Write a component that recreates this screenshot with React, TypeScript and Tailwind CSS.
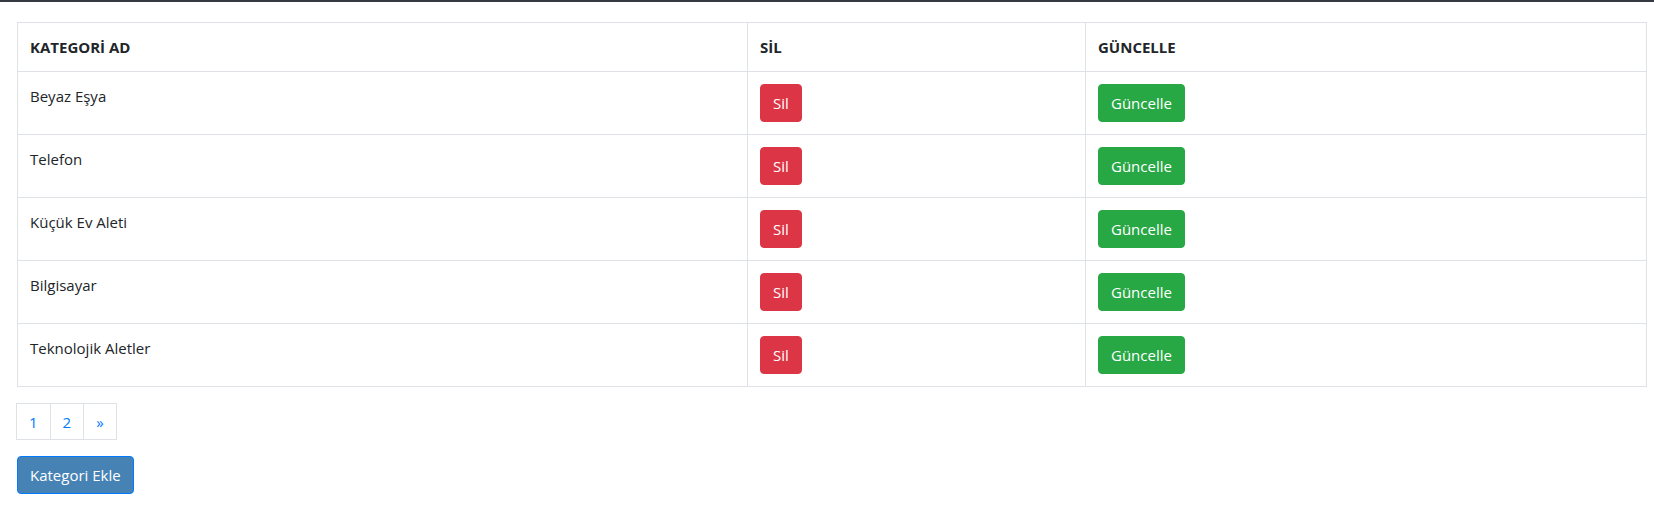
import React from 'react';

const categories = ['Beyaz Eşya', 'Telefon', 'Küçük Ev Aleti', 'Bilgisayar', 'Teknolojik Aletler'];

const font = { fontFamily: '"Segoe UI", "Open Sans", "Noto Sans", sans-serif' };

const App: React.FC = () => {
  return (
    <div className="min-h-[506px] bg-white text-[#212529] text-[15px] leading-6" style={font}>
      <div className="h-[2px] bg-[#343a40]" />

      <div className="pt-5 pr-2">
        <table className="ml-[17px] w-[1629px] table-fixed border-collapse border border-[#dee2e6]">
          <colgroup>
            <col className="w-[730px]" />
            <col className="w-[338px]" />
            <col className="w-[561px]" />
          </colgroup>
          <thead>
            <tr>
              <th className="border border-[#dee2e6] p-3 text-left align-top font-bold">KATEGORİ AD</th>
              <th className="border border-[#dee2e6] p-3 text-left align-top font-bold">SİL</th>
              <th className="border border-[#dee2e6] p-3 text-left align-top font-bold">GÜNCELLE</th>
            </tr>
          </thead>
          <tbody>
            {categories.map((name) => (
              <tr key={name}>
                <td className="border border-[#dee2e6] p-3 align-top">{name}</td>
                <td className="border border-[#dee2e6] p-3 align-top">
                  <button className="rounded border border-[#dc3545] bg-[#dc3545] px-3 py-1.5 text-white">
                    Sil
                  </button>
                </td>
                <td className="border border-[#dee2e6] p-3 align-top">
                  <button className="rounded border border-[#28a745] bg-[#28a745] px-3 py-1.5 text-white">
                    Güncelle
                  </button>
                </td>
              </tr>
            ))}
          </tbody>
        </table>

        <ul className="mt-4 ml-4 flex">
          {['1', '2', '»'].map((p, i) => (
            <li key={p} className={i > 0 ? '-ml-px' : ''}>
              <a
                href="#"
                className="flex h-[37px] items-center border border-[#dee2e6] bg-white px-3 leading-5 text-[#007bff]"
              >
                {p}
              </a>
            </li>
          ))}
        </ul>

        <button className="mt-4 ml-[17px] rounded border border-[#007bff] bg-[#4682b4] px-3 py-1.5 text-white">
          Kategori Ekle
        </button>
      </div>
    </div>
  );
};

export default App;
